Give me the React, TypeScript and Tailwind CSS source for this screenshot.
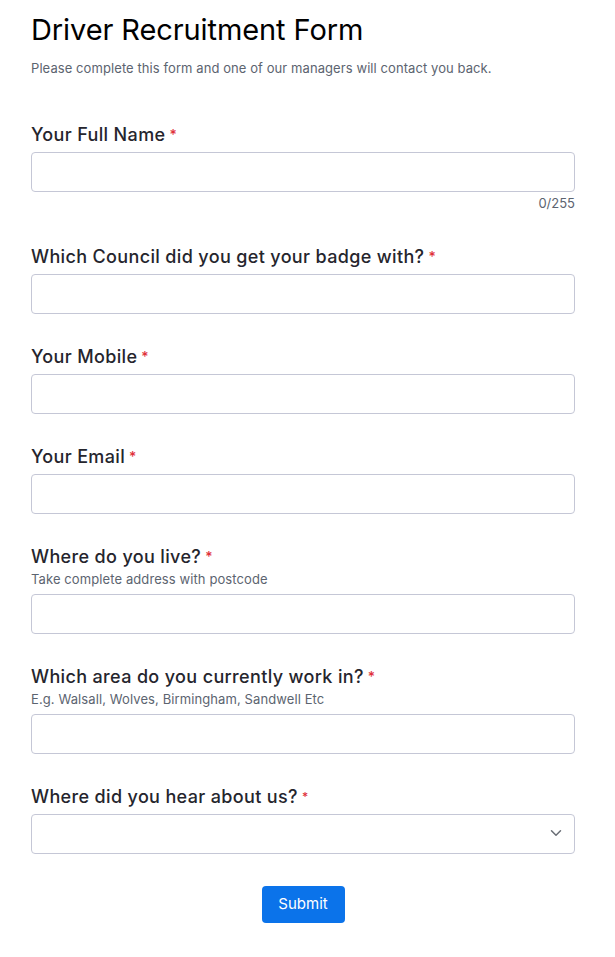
import { ChevronDown } from "lucide-react";

const labelClass = "block text-[18px] leading-6 font-medium text-[#25252d] tracking-[0.35px]";
const inputClass =
  "block h-10 w-full rounded-[4px] border border-[#c5c7d6] bg-white px-3 text-sm text-[#27272f] outline-none";
const hintClass = "text-[13px] leading-5 text-[#5c6470] tracking-[0.1px]";

function Label({ text, hint, small }: { text: string; hint?: string; small?: boolean }) {
  return (
    <div className="mb-[5px]">
      <label className={labelClass}>
        {text}
        <span className={`ml-1 align-top text-[#e0303a] ${small ? "text-[12px]" : "text-[14px]"}`}>*</span>
      </label>
      {hint ? <p className={hintClass}>{hint}</p> : null}
    </div>
  );
}

export default function App() {
  return (
    <div className="min-h-screen bg-white font-['Inter',sans-serif]">
      <div className="px-[31px] pt-[12px] pb-10 w-[575px] box-content">
        <h1 className="text-[29px] leading-9 font-normal text-black tracking-[-0.1px]">
          Driver Recruitment Form
        </h1>
        <p className="mt-[11px] text-[13px] leading-[18px] text-[#5c6470] tracking-[0.08px]">
          Please complete this form and one of our managers will contact you back.
        </p>

        <div className="mt-[46px] w-[544px]">
          <div>
            <Label text="Your Full Name" />
            <input className={inputClass} />
            <div className="mt-[2px] text-right text-[13px] leading-[18px] text-[#5c6470]">0/255</div>
          </div>

          <div className="mt-[33px]">
            <Label text="Which Council did you get your badge with?" />
            <input className={inputClass} />
          </div>

          <div className="mt-[31px]">
            <Label text="Your Mobile" />
            <input className={inputClass} />
          </div>

          <div className="mt-[31px]">
            <Label text="Your Email" />
            <input className={inputClass} />
          </div>

          <div className="mt-[31px]">
            <Label text="Where do you live?" hint="Take complete address with postcode" />
            <input className={inputClass} />
          </div>

          <div className="mt-[31px]">
            <Label
              text="Which area do you currently work in?"
              hint="E.g. Walsall, Wolves, Birmingham, Sandwell Etc"
            />
            <input className={inputClass} />
          </div>

          <div className="mt-[31px]">
            <Label text="Where did you hear about us?" small />
            <div className="relative">
              <select className={`${inputClass} appearance-none`} defaultValue="">
                <option value=""></option>
              </select>
              <ChevronDown
                className="pointer-events-none absolute right-[10px] top-[10px] h-[18px] w-[18px] text-[#6a6e76]"
                strokeWidth={2}
              />
            </div>
          </div>

          <div className="mt-[32px] flex justify-center">
            <button
              type="submit"
              className="h-[37px] w-[83px] rounded-[4px] bg-[#0b73ea] text-[15px] text-white"
            >
              Submit
            </button>
          </div>
        </div>
      </div>
    </div>
  );
}
